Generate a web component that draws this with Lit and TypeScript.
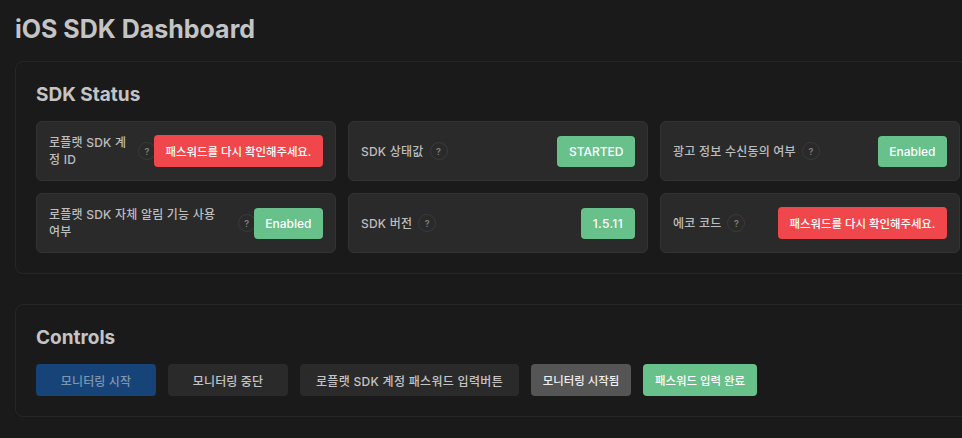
import { LitElement, html, css } from "lit";
import { customElement } from "lit/decorators.js";

type Item = { label: string; value: string; kind: "ok" | "bad" | "ok ver" };
const ERR = "패스워드를 다시 확인해주세요.";
const items: Item[] = [
  { label: "로플랫 SDK 계정 ID", value: ERR, kind: "bad" },
  { label: "SDK 상태값", value: "STARTED", kind: "ok" },
  { label: "광고 정보 수신동의 여부", value: "Enabled", kind: "ok" },
  { label: "로플랫 SDK 자체 알림 기능 사용 여\u2060부", value: "Enabled", kind: "ok" },
  { label: "SDK 버전", value: "1.5.11", kind: "ok ver" },
  { label: "에코 코드", value: ERR, kind: "bad" },
];

@customElement("app-root")
export class AppRoot extends LitElement {
  static styles = css`
    :host {
      display: block;
      width: 962px;
      height: 438px;
      overflow: hidden;
      background: #1a1a1a;
      font-family: Inter, "Noto Sans CJK KR", sans-serif;
      color: #c8c8c8;
    }
    .page { width: 981px; padding: 15px 0 0 15px; }
    h1 { margin: 0 0 17px; font-size: 25px; line-height: 29px; font-weight: 700; color: #c4c4c4; }
    .card {
      border: 1px solid #262626;
      border-radius: 8px;
      padding: 20px;
      width: 966px;
      box-sizing: border-box;
    }
    .card + .card { margin-top: 30px; }
    h2 { margin: 0 0 13px; font-size: 19px; line-height: 26px; font-weight: 700; color: #c4c4c4; }
    .grid { display: grid; grid-template-columns: repeat(3, 300px); grid-auto-rows: 60px; gap: 12px; }
    .item {
      display: flex;
      align-items: center;
      justify-content: space-between;
      box-sizing: border-box;
      padding: 0 12px;
      background: #2a2a2a;
      border: 1px solid #333;
      border-radius: 6px;
    }
    .left { display: flex; align-items: center; gap: 6px; min-width: 0; flex: 0 1 auto; }
    .label {
      font-size: 12px;
      line-height: 17px;
      font-weight: 500;
      letter-spacing: 0.22px;
      color: #bdbdbd;
      word-break: break-all;
    }
    .help {
      flex: none;
      box-sizing: border-box;
      width: 18px;
      height: 18px;
      margin-right: -2px;
      border: 1px solid #3a3a3a;
      border-radius: 50%;
      display: flex;
      align-items: center;
      justify-content: center;
      font-size: 9px;
      font-weight: 600;
      color: #808080;
    }
    .badge {
      position: relative;
      flex: none;
      box-sizing: border-box;
      padding: 0 11.5px;
      height: 31px;
      display: flex;
      align-items: center;
      border-radius: 4px;
      font-size: 12px;
      font-weight: 500;
      color: #fff;
      white-space: nowrap;
    }
    .ok { background: #68c08a; }
    .ver { padding: 0 12px; letter-spacing: 0.35px; }
    .bad { background: #ef474b; height: 32px; font-size: 11.4px; padding: 0 11.7px; }
    .buttons { display: flex; gap: 12px; }
    .btn {
      height: 32px;
      box-sizing: border-box;
      padding: 0 16px;
      border: none;
      border-radius: 4px;
      font: 500 12px Inter, "Noto Sans CJK KR", sans-serif;
      letter-spacing: 0.3px;
      background: #2a2a2a;
      color: #c4c4c4;
      white-space: nowrap;
    }
    .wide { width: 120px; padding: 0; letter-spacing: 0.15px; }
    .primary { background: #174478; color: #8096ae; }
    .started { width: 100px; padding: 0; font-size: 11.4px; letter-spacing: 0; background: #555; color: #f0f0f0; }
    .done { width: 114px; padding: 0; font-size: 11.4px; letter-spacing: 0; background: #68c08a; color: #fff; }
  `;

  render() {
    return html`
      <div class="page">
        <h1>iOS SDK Dashboard</h1>
        <section class="card">
          <h2>SDK Status</h2>
          <div class="grid">
            ${items.map(
              (i) => html`
                <div class="item">
                  <div class="left">
                    <span class="label">${i.label}</span>
                    <span class="help">?</span>
                  </div>
                  <span class="badge ${i.kind}">${i.value}</span>
                </div>
              `
            )}
          </div>
        </section>
        <section class="card">
          <h2>Controls</h2>
          <div class="buttons">
            <button class="btn wide primary">모니터링 시작</button>
            <button class="btn wide">모니터링 중단</button>
            <button class="btn">로플랫 SDK 계정 패스워드 입력버튼</button>
            <button class="btn started">모니터링 시작됨</button>
            <button class="btn done">패스워드 입력 완료</button>
          </div>
        </section>
      </div>
    `;
  }
}
